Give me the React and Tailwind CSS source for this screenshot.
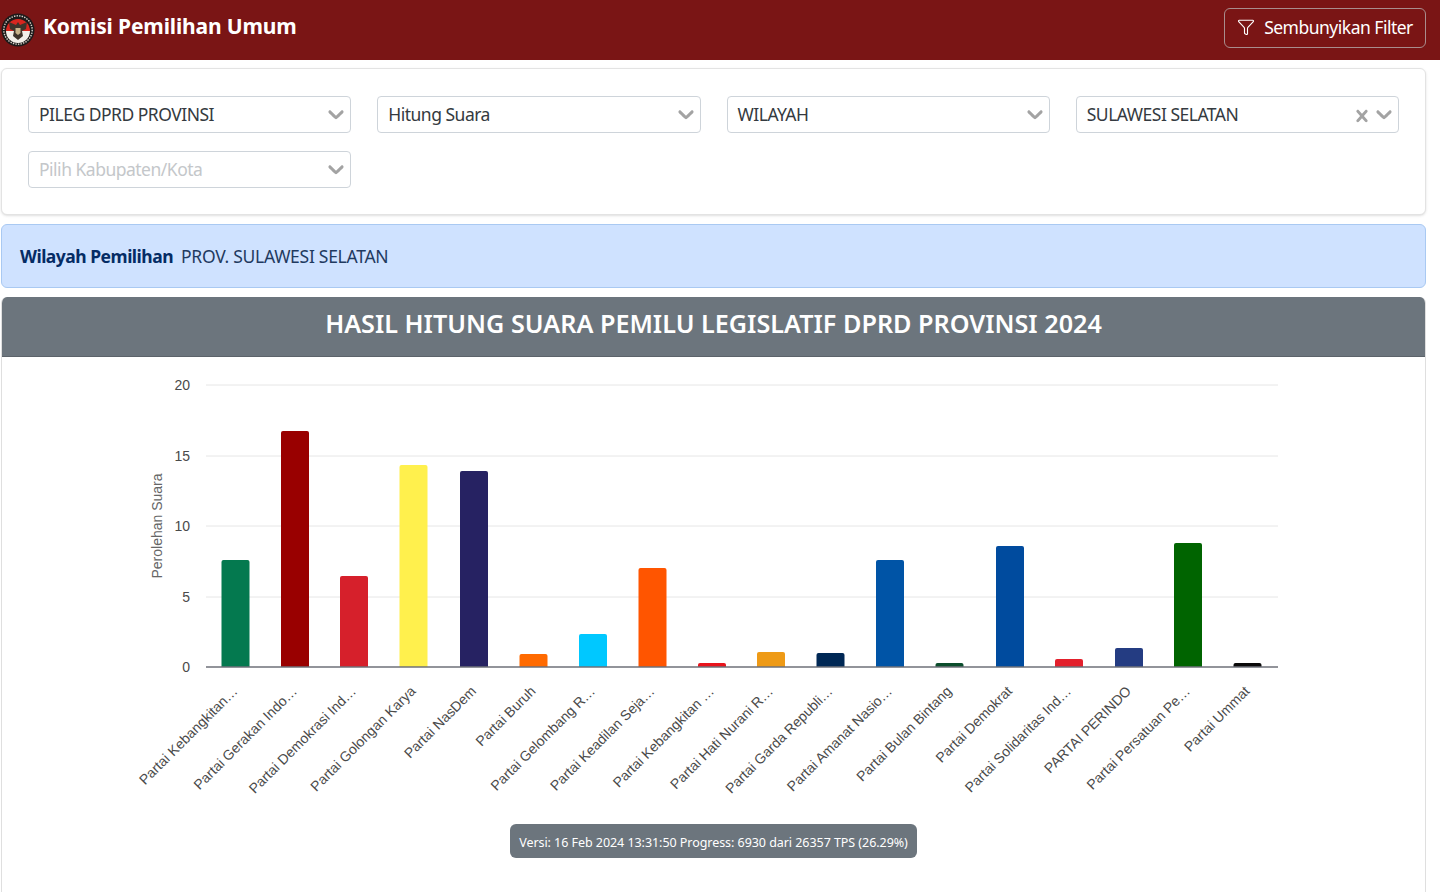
import { Filter } from "lucide-react";

const bars = [
  { label: "Partai Kebangkitan…", x: 235.5, top: 560, color: "#04794f" },
  { label: "Partai Gerakan Indo…", x: 295, top: 431, color: "#990000" },
  { label: "Partai Demokrasi Ind…", x: 354, top: 576, color: "#d6202b" },
  { label: "Partai Golongan Karya", x: 413.5, top: 465, color: "#fff04d" },
  { label: "Partai NasDem", x: 474, top: 471, color: "#262262" },
  { label: "Partai Buruh", x: 533.5, top: 654, color: "#ff6a00" },
  { label: "Partai Gelombang R…", x: 593, top: 634, color: "#00c8ff" },
  { label: "Partai Keadilan Seja…", x: 652.5, top: 568, color: "#ff5500" },
  { label: "Partai Kebangkitan …", x: 712, top: 663, color: "#e8141c" },
  { label: "Partai Hati Nurani R…", x: 771, top: 652, color: "#ee9a16" },
  { label: "Partai Garda Republi…", x: 830.5, top: 653, color: "#002855" },
  { label: "Partai Amanat Nasio…", x: 890, top: 560, color: "#0054a6" },
  { label: "Partai Bulan Bintang", x: 949.5, top: 663, color: "#0b4d2c" },
  { label: "Partai Demokrat", x: 1010, top: 546, color: "#004b9e" },
  { label: "Partai Solidaritas Ind…", x: 1069, top: 659, color: "#e3202c" },
  { label: "PARTAI PERINDO", x: 1129, top: 648, color: "#243c82" },
  { label: "Partai Persatuan Pe…", x: 1188, top: 543, color: "#006400" },
  { label: "Partai Ummat", x: 1247.5, top: 663, color: "#0a0a0a" },
];

const ticks = [
  { v: 20, y: 385 },
  { v: 15, y: 456 },
  { v: 10, y: 526 },
  { v: 5, y: 597 },
];

const chevron =
  "M4.516 7.548c0.436-0.446 1.043-0.481 1.576 0l3.908 3.747 3.908-3.747c0.533-0.481 1.141-0.446 1.574 0 0.436 0.445 0.408 1.197 0 1.615-0.406 0.418-4.695 4.502-4.695 4.502-0.217 0.223-0.502 0.335-0.787 0.335s-0.57-0.112-0.789-0.335c0 0-4.287-4.084-4.695-4.502s-0.436-1.17 0-1.615z";
const cross =
  "M14.348 14.849c-0.469 0.469-1.229 0.469-1.697 0l-2.651-3.030-2.651 3.029c-0.469 0.469-1.229 0.469-1.697 0-0.469-0.469-0.469-1.229 0-1.697l2.758-3.15-2.759-3.152c-0.469-0.469-0.469-1.228 0-1.697s1.228-0.469 1.697 0l2.652 3.031 2.651-3.031c0.469-0.469 1.228-0.469 1.697 0s0.469 1.229 0 1.697l-2.758 3.152 2.758 3.15c0.469 0.469 0.469 1.229 0 1.698z";

function SelectBox({ text, placeholder, clearable }) {
  return (
    <div className="flex h-[37px] items-center rounded border border-[#ced4da] bg-white pl-[10px] pr-[1px]">
      <span className={`flex-1 text-[17.5px] tracking-[-0.5px] ${placeholder ? "text-[#c4c7ca]" : "text-[#343a40]"}`}>
        {text}
      </span>
      {clearable && (
        <svg viewBox="0 0 20 20" className="-mr-[3px] mt-[3px] h-[24px] w-[24px] fill-[#a3a3a3]">
          <path d={cross} />
        </svg>
      )}
      <svg viewBox="0 0 20 20" className="mb-[1px] h-[26px] w-[26px] fill-[#a3a3a3]">
        <path d={chevron} />
      </svg>
    </div>
  );
}

function Logo() {
  return (
    <svg viewBox="0 0 34 34" className="h-[34px] w-[34px]">
      <circle cx="17" cy="17" r="16.5" fill="#1d1a1a" />
      <circle cx="17" cy="17" r="14.2" fill="none" stroke="#d9d4cc" strokeWidth="1.4" strokeDasharray="1.4 1.2" />
      <path d="M5 18a12 12 0 0 1 24 0z" fill="#d8261f" />
      <path d="M5 18a12 12 0 0 0 24 0z" fill="#f3efe9" />
      <path d="M17 9l2 3 7-3-1 7-4 2 1 5-5 4-5-4 1-5-4-2-1-7 7 3z" fill="#3f342b" />
      <path d="M14.5 15h5v5l-2.5 2-2.5-2z" fill="#c9b38a" />
    </svg>
  );
}

function Chart() {
  return (
    <svg width="1424" height="535" viewBox="2 357 1424 535" className="block" fontFamily="'Liberation Sans', sans-serif">
      {ticks.map((t) => (
        <line key={t.v} x1="206" x2="1278" y1={t.y} y2={t.y} stroke="#e6e6e6" />
      ))}
      {ticks.map((t) => (
        <text key={t.v} x="190" y={t.y + 5} textAnchor="end" fontSize="14" fill="#4a4a4a">
          {t.v}
        </text>
      ))}
      <text x="190" y="672" textAnchor="end" fontSize="14" fill="#4a4a4a">0</text>
      <text transform="translate(162 526) rotate(-90)" textAnchor="middle" fontSize="14" fill="#666666">
        Perolehan Suara
      </text>
      {bars.map((b) => (
        <path
          key={b.x}
          d={`M${b.x - 14} 667V${b.top + 2}q0 -2 2 -2h24q2 0 2 2V667z`}
          fill={b.color}
        />
      ))}
      <line x1="206" x2="1278" y1="667" y2="667" stroke="#6e7079" strokeWidth="1.5" />
      {bars.map((b) => (
        <text
          key={b.x}
          transform={`translate(${b.x + 3} 692) rotate(-45)`}
          textAnchor="end"
          fontSize="14"
          fill="#4a4a4a"
        >
          {b.label}
        </text>
      ))}
    </svg>
  );
}

export default function App() {
  return (
    <div className="relative h-[892px] overflow-hidden bg-white font-['Noto_Sans','Open_Sans',sans-serif]">
      <header className="flex h-[60px] items-center justify-between bg-[#7a1515] pl-px pr-[14px]">
        <div className="flex items-center gap-[8px]">
          <Logo />
          <span className="mb-[6px] text-[21px] font-bold tracking-[-0.15px] text-white">Komisi Pemilihan Umum</span>
        </div>
        <button className="mb-[5px] flex h-[40px] w-[202px] items-center justify-center gap-[9px] rounded-md border border-[#a98d8d] text-[17.5px] tracking-[-0.5px] text-white">
          <Filter size={18} strokeWidth={1.5} className="mb-[2px]" />
          Sembunyikan Filter
        </button>
      </header>

      <main className="flex flex-col gap-[9px] pl-px pr-[14px] pt-2">
        <section className="grid grid-cols-4 gap-x-[26px] gap-y-[18px] rounded-md border border-[#e3e3e3] bg-white px-[26px] pb-[26px] pt-[27px] shadow-sm">
          <SelectBox text="PILEG DPRD PROVINSI" />
          <SelectBox text="Hitung Suara" />
          <SelectBox text="WILAYAH" />
          <SelectBox text="SULAWESI SELATAN" clearable />
          <SelectBox text="Pilih Kabupaten/Kota" placeholder />
        </section>

        <section className="flex h-[64px] items-center gap-[8px] rounded-md border border-[#a9c9f2] bg-[#cfe2ff] px-[18px] text-[17.5px]">
          <strong className="font-bold tracking-[-0.5px] text-[#052c65]">Wilayah Pemilihan</strong>
          <span className="tracking-[-0.28px] text-[#1f3a60]">PROV. SULAWESI SELATAN</span>
        </section>

        <section className="overflow-hidden rounded-t-md border-x border-[#dfdfdf]">
          <h1 className="flex h-[60px] items-center justify-center border-b border-[#5c636a] bg-[#6c757d] pb-[6px] text-[25.2px] font-semibold text-white">
            HASIL HITUNG SUARA PEMILU LEGISLATIF DPRD PROVINSI 2024
          </h1>
          <Chart />
        </section>
      </main>

      <div className="absolute left-[510px] top-[824px] flex h-[34px] w-[407px] items-center justify-center rounded-md bg-[#6c757d] pt-[4px] text-[12.5px] tracking-[-0.05px] text-white">
        Versi: 16 Feb 2024 13:31:50 Progress: 6930 dari 26357 TPS (26.29%)
      </div>
    </div>
  );
}
